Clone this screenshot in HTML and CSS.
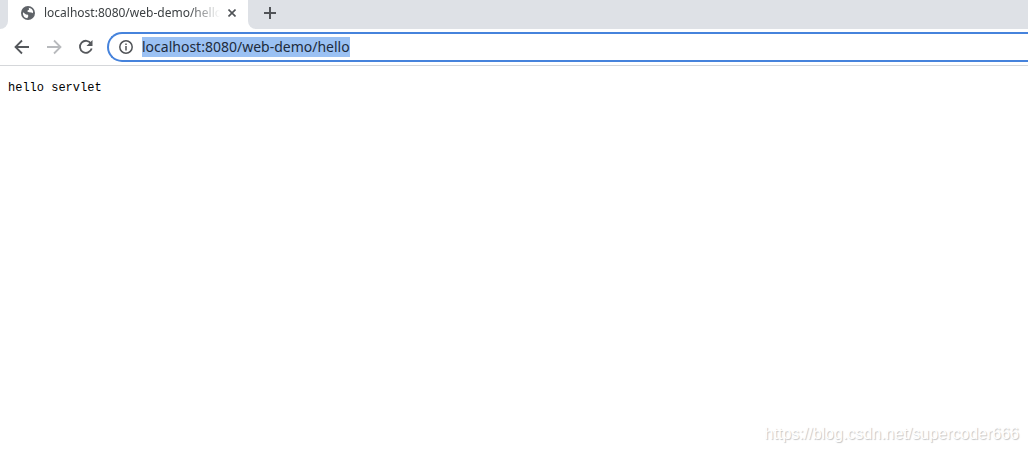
FILE: index.html
```html
<!DOCTYPE html>
<html lang="en">
<head>
  <meta charset="UTF-8">
  <meta name="viewport" content="width=device-width, initial-scale=1.0">
  <title>localhost:8080/web-demo/hello</title>
  <link rel="stylesheet" href="styles.css">
</head>
<body>
<header class="browser">
  <div class="tab-strip">
    <div class="tab">
      <svg class="globe" viewBox="0 0 14 14" width="14" height="14" aria-hidden="true">
        <circle cx="7" cy="7" r="7" fill="#5f6368"/>
        <path d="M2 6.200L5 8.500L7 8.800L7.300 10.300L6.300 12.200C3.500 12 1.500 9.500 2 6.200ZM7.800 1.800C10 2 11.800 3.600 12.200 6L11.500 7.300L10.500 6.500L8 6.300L6.400 5.600L6.600 4.400L8 3.800Z" fill="#fff"/>
      </svg>
      <span class="tab-title">localhost:8080/web-demo/hello</span>
      <button class="close" type="button" aria-label="Close tab">
        <svg viewBox="0 0 8 8" width="8" height="8"><path d="M.5 .5L7.500 7.500M7.500 .5L.5 7.500"/></svg>
      </button>
    </div>
    <button class="new-tab" type="button" aria-label="New tab">
      <svg viewBox="0 0 12 12" width="12" height="12"><path d="M6 0V12M0 6H12"/></svg>
    </button>
  </div>
  <form class="toolbar" id="addressForm">
    <button class="nav" type="button" aria-label="Back">
      <svg viewBox="0 0 16 16" width="16" height="16"><path d="M15 8H2M8 1.500L1.500 8L8 14.500"/></svg>
    </button>
    <button class="nav" type="button" aria-label="Forward" disabled>
      <svg viewBox="0 0 16 16" width="16" height="16"><path d="M1 8H14M8 1.500L14.500 8L8 14.500"/></svg>
    </button>
    <button class="nav" type="button" aria-label="Reload">
      <svg viewBox="0 0 16 16" width="16" height="16"><path d="M13 4.500A6 6 0 1 0 13.700 9.500"/><path class="solid" d="M14.500 1V7H8.500Z"/></svg>
    </button>
    <div class="address-bar">
      <svg class="info" viewBox="0 0 14 14" width="14" height="14" aria-hidden="true">
        <circle cx="7" cy="7" r="6.200"/>
        <path d="M7 6V10.500M7 3.500V5"/>
      </svg>
      <input class="address" id="address" type="text" value="localhost:8080/web-demo/hello" aria-label="Address" spellcheck="false" autofocus>
    </div>
  </form>
</header>
<main class="page">
  <p class="result">hello servlet</p>
</main>
<footer class="watermark">https://blog.csdn.net/supercoder666</footer>
<script>
  const address = document.getElementById('address');
  address.focus();
  address.select();
  document.getElementById('addressForm').addEventListener('submit', function(event) {
    event.preventDefault();
  });
</script>
</body>
</html>
```
FILE: styles.css
```css
* {
  box-sizing: border-box;
}
body {
  display: flex;
  flex-direction: column;
  min-height: 100vh;
  margin: 0;
  background-color: #fff;
  font-family: "Noto Sans", "Open Sans", sans-serif;
}
button {
  display: flex;
  align-items: center;
  justify-content: center;
  padding: 0;
  border: none;
  background: none;
  cursor: pointer;
}
svg {
  flex: none;
  fill: none;
  stroke: #505357;
  stroke-width: 2;
}
.tab-strip {
  display: flex;
  height: 29px;
  background-color: #fff;
}
.tab-strip::before {
  content: "";
  width: 8px;
  background-color: #dee1e6;
  border-bottom-right-radius: 8px;
}
.tab {
  display: flex;
  align-items: center;
  width: 240px;
  padding: 0 12px 4px 13px;
}
.globe {
  margin-right: 9px;
  stroke: none;
}
.tab-title {
  flex: 1;
  overflow: hidden;
  color: #3c4043;
  font-size: 12px;
  line-height: 20px;
  white-space: nowrap;
  -webkit-mask-image: linear-gradient(to right, #000 82%, transparent);
  mask-image: linear-gradient(to right, #000 82%, transparent);
}
.close {
  width: 8px;
  height: 16px;
  margin-left: 8px;
}
.close svg {
  stroke-width: 1.600;
}
.new-tab {
  flex: 1;
  justify-content: flex-start;
  padding: 0 0 4px 16px;
  background-color: #dee1e6;
  border-bottom-left-radius: 8px;
}
.toolbar {
  display: flex;
  align-items: center;
  height: 37px;
  padding-left: 6px;
  border-bottom: 1px solid #d5d7da;
}
.nav {
  width: 32px;
  height: 32px;
}
.nav svg {
  stroke: #55585c;
  stroke-width: 1.800;
}
.nav:disabled svg {
  stroke: #b8babd;
}
.nav .solid {
  fill: #55585c;
  stroke: none;
}
.address-bar {
  display: flex;
  flex: 1;
  align-items: center;
  height: 30px;
  margin-left: 5px;
  padding-left: 10px;
  border: 2px solid #4683dc;
  border-right: none;
  border-radius: 15px 0 0 15px;
}
.info {
  stroke-width: 1.500;
}
.address {
  flex: 1;
  min-width: 0;
  height: 20px;
  margin-left: 9px;
  padding: 0;
  border: none;
  outline: none;
  background: none;
  color: #202b3c;
  font-family: inherit;
  font-size: 14px;
  line-height: 20px;
}
.address::selection {
  background-color: #9bc1f3;
  color: #202b3c;
}
.page {
  flex: 1;
  padding: 14px 8px;
}
.result {
  margin: 0;
  color: #000;
  font-family: "Liberation Mono", monospace;
  font-size: 12px;
  line-height: 16px;
}
.watermark {
  padding: 0 9px 8px;
  color: #fff;
  font-family: "Liberation Sans", Arial, sans-serif;
  font-size: 16px;
  line-height: 20px;
  text-align: right;
  text-shadow: 1px 1px 1px #c4c4c4;
}
```
